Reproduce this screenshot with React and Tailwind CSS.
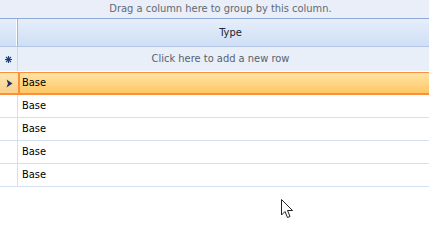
export default function App() {
  const rows = ["Base", "Base", "Base", "Base"];
  return (
    <div className="w-[429px] h-[241px] bg-white relative overflow-hidden text-[11px]" style={{ fontFamily: '"DejaVu Sans Condensed", "Liberation Sans", sans-serif' }}>
      <div className="h-[19px] bg-[#e9eef8] border-b border-[#8eaad6] flex items-center justify-center pl-[12px] text-[#5f6a76]">
        Drag a column here to group by this column.
      </div>
      <div className="flex h-[28px] border-b border-[#b3c6e3] bg-gradient-to-b from-[#e6eefa] to-[#cfdff5]">
        <div className="w-[18px] border-r border-[#9fb6da] shadow-[inset_-1px_0_0_#fff]"></div>
        <div className="flex-1 flex items-center justify-center pt-[1px] pl-[14px] text-[#1b2430]">Type</div>
      </div>
      <div className="flex h-[25px] bg-[#e9eff9] border-b border-[#fff]">
        <div className="w-[18px] border-r border-[#c8d8ee] flex items-center justify-center">
          <svg width="7" height="7" viewBox="0 0 7 7">
            <path d="M3.5 0 V7 M0 3.5 H7 M1 1 L6 6 M6 1 L1 6" stroke="#1f3e80" strokeWidth="1.1" />
          </svg>
        </div>
        <div className="flex-1 flex items-center justify-center pr-[6px] text-[#58616c]">Click here to add a new row</div>
      </div>
      <div className="flex h-[23px] border-t border-b-2 border-[#fb8f3c] bg-gradient-to-b from-[#ffe3a4] to-[#ffc763]">
        <div className="w-[18px] flex items-center justify-center bg-gradient-to-b from-[#fde6b0] to-[#fbd18c]">
          <svg width="7" height="9" viewBox="0 0 7 9"><path d="M0.5 0.5 L6.5 4.5 L0.5 8.5 L2 4.5 Z" fill="#1c3563" /></svg>
        </div>
        <div className="flex-1 flex items-center pl-[2px] border-l-2 border-[#fb8f3c] text-black">Base</div>
      </div>
      {rows.map((r, i) => (
        <div key={i} className="flex h-[23px] border-b border-[#d3e0f3]">
          <div className="w-[18px] border-r border-[#d3e0f3]"></div>
          <div className="flex-1 flex items-center pl-[4px] text-black">{r}</div>
        </div>
      ))}
      <svg className="absolute left-[281px] top-[199px]" width="13" height="20" viewBox="0 0 13 20">
        <path d="M0.5 0.5 L0.5 16 L4 12.5 L6.5 18.5 L9 17.5 L6.5 11.5 L11.5 11.5 Z" fill="#fff" stroke="#222" strokeWidth="1" />
      </svg>
    </div>
  );
}
